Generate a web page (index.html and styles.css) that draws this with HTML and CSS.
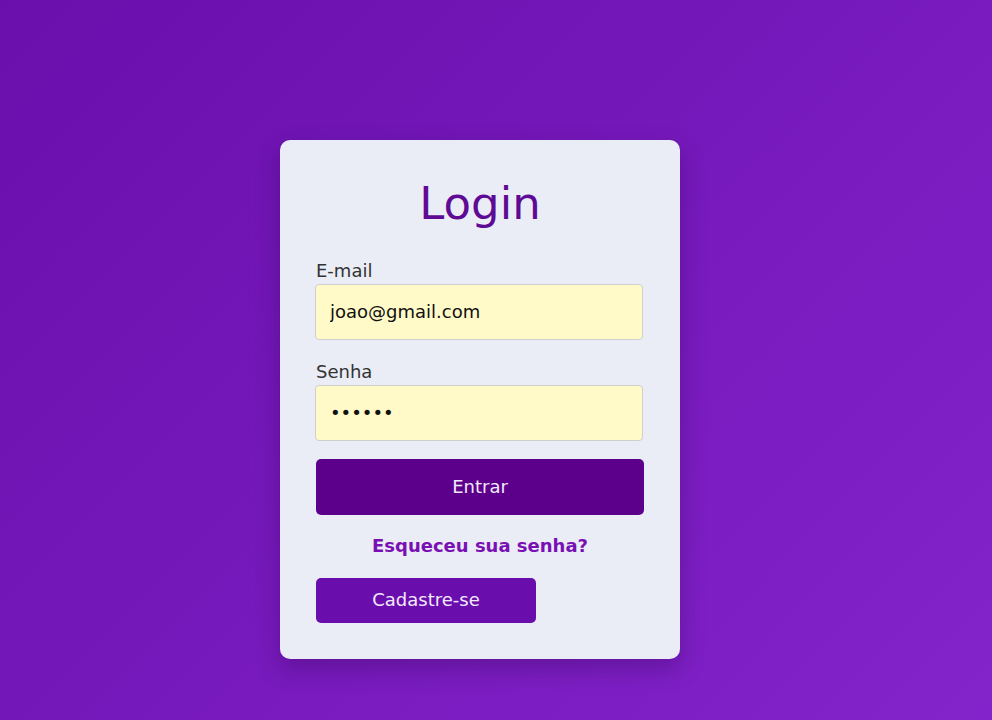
FILE: index.html
```html
<!DOCTYPE html>
<html lang="pt-BR">
<head>
<meta charset="utf-8">
<title>Login</title>
<link rel="stylesheet" href="styles.css">
</head>
<body>
<main class="page">
  <form class="card">
    <h2 class="title">Login</h2>
    <div class="field">
      <label class="label" for="email">E-mail</label>
      <input class="input" id="email" type="email" value="joao@gmail.com">
    </div>
    <div class="field">
      <label class="label" for="senha">Senha</label>
      <input class="input" id="senha" type="password" value="123456">
    </div>
    <button class="btn-primary" type="button">Entrar</button>
    <a class="forgot" href="#">Esqueceu sua senha?</a>
    <button class="btn-secondary" type="button">Cadastre-se</button>
  </form>
</main>
</body>
</html>
```
FILE: styles.css
```css
* { box-sizing: border-box; }

html, body {
  margin: 0;
  height: 100%;
}

body {
  font-family: "DejaVu Sans", sans-serif;
  background: linear-gradient(135deg, #6a0fac 0%, #8323cb 100%);
  min-height: 720px;
}

.page {
  padding: 140px 0 0 280px;
}

.card {
  width: 400px;
  height: 519px;
  background: #eaedf6;
  border-radius: 10px;
  padding: 36px;
  box-shadow: 0 10px 25px rgba(40, 0, 70, 0.3);
  display: flex;
  flex-direction: column;
}

.title {
  margin: 0 0 28px;
  font-size: 45px;
  font-weight: normal;
  line-height: 56px;
  text-align: center;
  color: #5e0a94;
}

.field {
  display: flex;
  flex-direction: column;
  margin-bottom: 21px;
}

.field + .field {
  margin-bottom: 18px;
}

.label {
  font-size: 18px;
  line-height: 21px;
  color: #333;
  margin-bottom: 3px;
}

.input {
  width: 328px;
  height: 56px;
  margin-left: -1px;
  padding: 0 14px 2px;
  font-family: "DejaVu Sans", sans-serif;
  font-size: 18px;
  color: #111;
  background: #fffac8;
  border: 1px solid #cfcfcf;
  border-radius: 4px;
  outline: none;
}

.btn-primary {
  width: 328px;
  height: 56px;
  padding: 0 0 2px;
  border: 0;
  border-radius: 5px;
  background: #5c008c;
  color: #f2eafc;
  font-family: "DejaVu Sans", sans-serif;
  font-size: 18px;
}

.forgot {
  margin-top: 20px;
  text-align: center;
  font-size: 18px;
  line-height: 21px;
  font-weight: bold;
  color: #7a10b4;
  text-decoration: none;
}

.btn-secondary {
  margin-top: 22px;
  width: 220px;
  height: 45px;
  padding: 0 0 2px;
  border: 0;
  border-radius: 5px;
  background: #6a0dad;
  color: #f2eafc;
  font-family: "DejaVu Sans", sans-serif;
  font-size: 18px;
}
```
